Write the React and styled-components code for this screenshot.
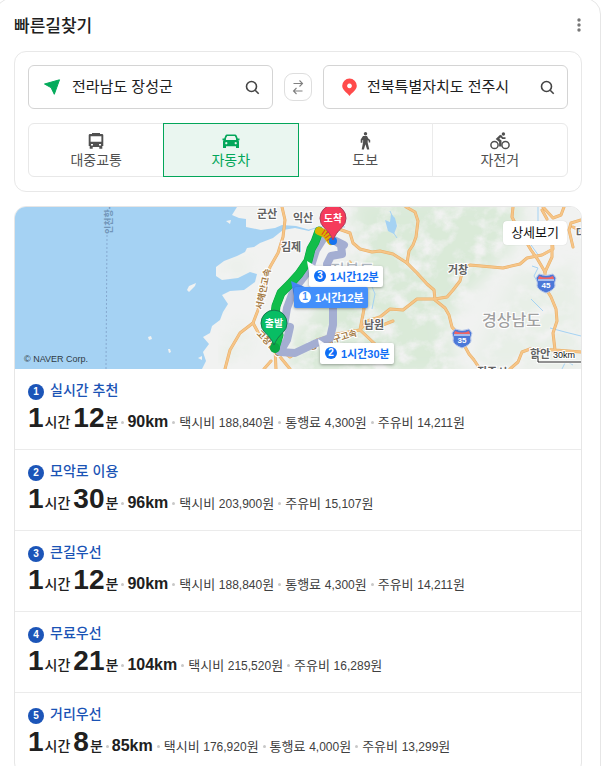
import { useState } from "react";
import styled, { createGlobalStyle } from "styled-components";

const MAP_WIDTH = 566;
const MAP_HEIGHT = 162;

const GlobalStyle = createGlobalStyle`
  * {
    box-sizing: border-box;
  }

  body {
    background: #fff;
    color: #202020;
    font-family: "Liberation Sans", "Noto Sans CJK KR", sans-serif;
    margin: 0;
  }

  button, input {
    font-family: inherit;
  }
`;

const Card = styled.main`
  border: 1px solid #e6e6e6;
  border-radius: 16px;
  margin: -2px 6px 0 -5px;
  padding: 0 18px 20px;
`;

const Header = styled.header`
  align-items: center;
  display: flex;
  height: 52px;
  justify-content: space-between;
`;

const Title = styled.h2`
  font-family: "Noto Sans CJK KR", sans-serif;
  font-size: 17px;
  font-weight: 500;
  line-height: 24px;
  margin: 0;
`;

const MoreButton = styled.button`
  background: none;
  border: 0;
  display: flex;
  height: 20px;
  padding: 3px 0;
  width: 5px;
`;

const SearchPanel = styled.section`
  border: 1px solid #e8e8e8;
  border-radius: 12px;
  display: flex;
  flex-direction: column;
  gap: 14px;
  margin-bottom: 14px;
  padding: 13px 13px 14px;
`;

const Places = styled.form`
  align-items: center;
  display: flex;
  gap: 11px;
`;

const Field = styled.div`
  align-items: center;
  border: 1px solid #d4d4d4;
  border-radius: 6px;
  display: flex;
  flex: 1;
  height: 44px;
  min-width: 0;
  padding: 0 11px 0 14px;
`;

const FieldLabel = styled.label`
  display: flex;
  flex: none;
  margin-right: 9px;
`;

const FieldInput = styled.input`
  background: none;
  border: 0;
  color: #202020;
  flex: 1;
  font-size: 15px;
  height: 28px;
  min-width: 0;
  outline: 0;
  padding: 0 0 4px;
`;

const IconButton = styled.button`
  background: none;
  border: 0;
  display: flex;
  flex: none;
  padding: 0;
`;

const SwapButton = styled(IconButton)`
  align-items: center;
  border: 1px solid #dedede;
  border-radius: 9px;
  height: 28px;
  justify-content: center;
  width: 28px;
`;

const Tabs = styled.div`
  border: 1px solid #e8e8e8;
  border-radius: 6px;
  display: flex;
  height: 54px;
`;

const Tab = styled.button`
  align-items: center;
  background: ${({ $active }) => ($active ? "#eaf6f0" : "none")};
  border: 1px solid ${({ $active }) => ($active ? "#03a65a" : "transparent")};
  color: ${({ $active }) => ($active ? "#03a65a" : "#505050")};
  display: flex;
  flex: 1;
  flex-direction: column;
  font-size: 14px;
  line-height: 20px;
  margin: -1px;
  padding: 8px 0 0;
  position: relative;
  z-index: ${({ $active }) => ($active ? 1 : 0)};

  &:not(:first-child) {
    border-left-color: ${({ $active }) => ($active ? "#03a65a" : "#ebebeb")};
  }
`;

const Results = styled.section`
  border: 1px solid #e6e6e6;
  border-radius: 12px;
  overflow: hidden;
`;

const MapFrame = styled.div`
  aspect-ratio: ${MAP_WIDTH} / ${MAP_HEIGHT};
  overflow: hidden;
  position: relative;
`;

const MapDrawing = styled.svg`
  display: block;
  height: 100%;
  width: 100%;
`;

const DetailLink = styled.a`
  background: #fff;
  border-radius: 4px;
  box-shadow: 0 0 1px #0003;
  color: #111;
  font-size: 13px;
  line-height: 24px;
  padding: 0 8px;
  position: absolute;
  right: 14px;
  text-decoration: none;
  top: 14px;
`;

const RouteTag = styled.button`
  align-items: center;
  background: ${({ $selected }) => ($selected ? "#438ffb" : "#fff")};
  border: 0;
  border-radius: 2px;
  box-shadow: 0 1px 3px #0005;
  color: ${({ $selected }) => ($selected ? "#fff" : "#0f6df5")};
  display: flex;
  font-size: 11px;
  font-weight: 700;
  gap: 4px;
  height: 21px;
  left: ${({ $x }) => ($x / MAP_WIDTH) * 100}%;
  padding: 0 4px 2px 5px;
  position: absolute;
  top: ${({ $y }) => ($y / MAP_HEIGHT) * 100}%;
  white-space: nowrap;
`;

const TagNumber = styled.span`
  background: ${({ $selected }) => ($selected ? "#fff" : "#0f6df5")};
  border-radius: 50%;
  color: ${({ $selected }) => ($selected ? "#438ffb" : "#fff")};
  font-size: 10px;
  height: 12px;
  line-height: 12px;
  text-align: center;
  width: 12px;
`;

const RouteList = styled.ol`
  list-style: none;
  margin: 0;
  padding: 0;
`;

const RouteItem = styled.li`
  border-bottom: 1px solid #ebebeb;
  padding: 12px 13px 13px;
`;

const RouteName = styled.a`
  align-items: center;
  color: #1a53b5;
  display: flex;
  font-size: 14px;
  font-weight: 500;
  gap: 6px;
  line-height: 19px;
  text-decoration: none;
`;

const RouteNumber = styled.span`
  background: #1c55b8;
  border-radius: 50%;
  color: #fff;
  font-size: 10px;
  font-weight: 700;
  height: 16px;
  line-height: 16px;
  margin-top: 3px;
  text-align: center;
  width: 16px;
`;

const RouteSummary = styled.div`
  align-items: baseline;
  display: flex;
  height: 36px;
  line-height: 36px;
  white-space: nowrap;
`;

const Amount = styled.strong`
  font-size: 28px;
`;

const Unit = styled.span`
  font-size: 14px;
  font-weight: 500;
  margin-left: 1px;

  & + strong {
    margin-left: 3px;
  }

  & + i {
    margin: 0 3px;
  }
`;

const Distance = styled.strong`
  font-size: 16px;
`;

const Dot = styled.i`
  background: #c8c8c8;
  border-radius: 50%;
  height: 3px;
  position: relative;
  top: -3px;
  width: 3px;

  ${Distance} ~ & {
    margin: 0 4px;
  }
`;

const Cost = styled.span`
  color: #404040;
  font-size: 13px;
`;

const CostNumber = styled.span`
  font-size: 12px;
`;

const tabs = [
  { key: "transit", label: "대중교통", Icon: BusIcon },
  { key: "car", label: "자동차", Icon: CarIcon },
  { key: "walk", label: "도보", Icon: WalkIcon },
  { key: "bike", label: "자전거", Icon: BikeIcon },
];

const routes = [
  {
    name: "실시간 추천",
    hours: 1,
    minutes: 12,
    distance: "90km",
    costs: [["택시비", "188,840"], ["통행료", "4,300"], ["주유비", "14,211"]],
  },
  {
    name: "모악로 이용",
    hours: 1,
    minutes: 30,
    distance: "96km",
    costs: [["택시비", "203,900"], ["주유비", "15,107"]],
  },
  {
    name: "큰길우선",
    hours: 1,
    minutes: 12,
    distance: "90km",
    costs: [["택시비", "188,840"], ["통행료", "4,300"], ["주유비", "14,211"]],
  },
  {
    name: "무료우선",
    hours: 1,
    minutes: 21,
    distance: "104km",
    costs: [["택시비", "215,520"], ["주유비", "16,289"]],
  },
  {
    name: "거리우선",
    hours: 1,
    minutes: 8,
    distance: "85km",
    costs: [["택시비", "176,920"], ["통행료", "4,000"], ["주유비", "13,299"]],
  },
];

const routeTags = [
  { number: 3, time: "1시간12분", x: 294, y: 59 },
  { number: 1, time: "1시간12분", x: 279, y: 80, selected: true },
  { number: 2, time: "1시간30분", x: 305, y: 136 },
];

const roads = [
  "M267 0 L270 13 L268 30 L263 46 L255 60 L249 80 L243 103 L238 116 L225 126 L215 143 L210 162",
  "M318 20 L335 26 L338 36 L345 42 L357 45 L365 44 L378 47 L392 56",
  "M391 0 L400 5 L403 14 L401 30 L398 38 L394 44 L392 56 L402 66 L412 77 L419 83 L420 93 L430 101 L434 108 L437 120 L444 128 L448 136 L454 147 L459 153 L465 162",
  "M252 133 L275 150 L302 133 L322 127 L345 123 L352 114 L365 110 L375 102 L388 103 L402 92 L420 92 L432 90 L438 83 L445 74 L448 62 L455 58 L477 60 L488 61 L505 57 L512 51 L527 48 L538 42 L537 30",
  "M507 28 L516 43 L523 53 L530 65 L530 80 L536 90 L541 102 L542 114 L538 126 L540 143 L566 145",
  "M498 0 L497 10 L504 24 M528 0 L538 11 L546 8 L549 0 M527 3 L532 12 M566 13 L556 16 L554 23 L558 40 M558 20 L566 24",
  "M537 35 L537 50 L530 65",
  "M495 162 L503 155 L507 145 L515 142 L540 143",
  "M238 116 L244 127 L256 137 L266 151 L275 162 M260 141 L261 162 M249 162 L256 154",
  "M345 123 L349 102 L345 78 L335 55 M345 123 L360 137 L365 145 M365 119 L378 114",
];

const regionLabels = [
  { text: "군산", x: 242, y: 11 },
  { text: "익산", x: 278, y: 15 },
  { text: "김제", x: 266, y: 44 },
  { text: "남원", x: 349, y: 122 },
  { text: "거창", x: 433, y: 67 },
  { text: "함안", x: 515, y: 151 },
  { text: "진주시", x: 462, y: 169 },
  { text: "대구", x: 561, y: 30 },
];

function BusIcon() {
  return (
    <svg width="18" height="18" viewBox="0 0 18 18" aria-hidden="true">
      <path
        fill="currentColor"
        fillRule="evenodd"
        d="M5 1h8v1h2q1.300 0 1.300 1.300V14h-1v2.800h-3V15H5.700v1.800h-3V14h-1V3.300Q1.700 2 3 2h2zM3.600 4.300v5.400h10.800V4.300zM4 12v1.500h2V12zm8 0v1.500h2V12z"
      />
    </svg>
  );
}

function CarIcon() {
  return (
    <svg width="18" height="18" viewBox="0 0 18 18" aria-hidden="true">
      <path
        fill="currentColor"
        fillRule="evenodd"
        d="M5 2.500h8q1.200 0 1.600 1.100l1.200 3h1.700v1.700h-1.100q.6.700.6 1.700v6h-3v-1.800H4V16H1v-6q0-1 .6-1.700H.5V6.600h1.700l1.200-3Q3.800 2.500 5 2.500zm.2 1.400Q3.600 6 3.900 8h10.200q.3-2-1.300-4.100zM4.300 10a1.100 1.100 0 1 0 .01 0zm9.400 0a1.100 1.100 0 1 0 .01 0z"
      />
    </svg>
  );
}

function WalkIcon() {
  return (
    <svg width="18" height="18" viewBox="0 0 18 18" aria-hidden="true">
      <circle cx="9.500" cy="1.800" r="1.700" fill="currentColor" />
      <path
        fill="currentColor"
        d="M7 4h4l1.300 2.500 1.900 1.500v2.500h-1.500V8.700l-1-.5v2.500l1.500 6.300v.6h-2.100L9.400 12.300 7.900 17.600H5.700L7.100 10V7.800l-.7.700v2.300H4.700V7.400z"
      />
    </svg>
  );
}

function BikeIcon() {
  return (
    <svg width="20" height="18" viewBox="0 0 20 18" aria-hidden="true">
      <g fill="none" stroke="currentColor">
        <circle cx="4.500" cy="13" r="3.600" strokeWidth="1.500" />
        <circle cx="15.500" cy="13" r="3.600" strokeWidth="1.500" />
        <path d="M11 3.500 7.500 7l2.800 2.200v5.300" strokeWidth="2.400" />
        <path d="m10.500 3.500 2 2.600h3" strokeWidth="1.700" />
      </g>
      <circle cx="13.400" cy="2" r="1.700" fill="currentColor" />
    </svg>
  );
}

function SearchIcon() {
  return (
    <svg width="18" height="18" viewBox="0 0 18 18" aria-hidden="true">
      <g fill="none" stroke="#444" strokeWidth="1.600">
        <circle cx="8.500" cy="8.500" r="5" />
        <path d="m12.200 12.200 3.500 3.500" />
      </g>
    </svg>
  );
}

function SwapIcon() {
  return (
    <svg width="12" height="16" viewBox="0 0 12 16" aria-hidden="true">
      <path
        d="M1.500 4.500h9M7.500 1.500l3 3-3 3M10.500 12h-9m3-3-3 3 3 3"
        fill="none"
        stroke="#808080"
        strokeWidth="1.100"
      />
    </svg>
  );
}

function DepartureIcon() {
  return (
    <svg width="20" height="20" viewBox="0 0 20 20" aria-hidden="true">
      <path
        d="M1.500 7 16.500 2.800 11.300 17.300 8 10.600z"
        fill="#03ab5b"
        stroke="#03ab5b"
        strokeLinejoin="round"
      />
    </svg>
  );
}

function ArrivalIcon() {
  return (
    <svg width="20" height="20" viewBox="0 0 20 20" aria-hidden="true">
      <path
        fill="#ff4b4b"
        fillRule="evenodd"
        d="M11.500 1.500A7.300 7.300 0 0 0 4.200 8.800c0 4 4.300 6.500 7.300 10.200 3-3.700 7.300-6.200 7.300-10.200a7.300 7.300 0 0 0-7.300-7.300zm0 5a2.400 2.400 0 1 1-.01 0z"
      />
    </svg>
  );
}

function MapPin({ x, y, label, color, edge }) {
  return (
    <g transform={`translate(${x} ${y})`}>
      <path
        d="M0 22C-2 17-5 13-9 9.500A13 13 0 1 1 9 9.500C5 13 2 17 0 22z"
        fill={color}
        stroke={edge}
        strokeWidth="1"
      />
      <text y="4" fill="#fff" fontSize="10" fontWeight="700" textAnchor="middle">
        {label}
      </text>
    </g>
  );
}

function RoadShield({ x, y, number }) {
  return (
    <g transform={`translate(${x} ${y})`}>
      <path
        d="M-7-9Q0-6 7-9L10-5Q8 0 9 3 8 7 0 10-8 7-9 3-8 0-10-5z"
        fill="#4c78d8"
        stroke="#b9c8ea"
      />
      <path d="M-7-7Q0-4 7-7L8-4H-8z" fill="#f06464" />
      <path d="M-8-3H8" stroke="#fff" />
      <text y="5" fill="#fff" fontSize="8" fontWeight="700" textAnchor="middle">
        {number}
      </text>
    </g>
  );
}

function RouteMap() {
  return (
    <MapFrame>
      <MapDrawing
        viewBox={`0 0 ${MAP_WIDTH} ${MAP_HEIGHT}`}
        preserveAspectRatio="xMidYMid slice"
        role="img"
        aria-label="경로 지도"
      >
        <defs>
          <filter id="relief" x="0" y="0" width="100%" height="100%">
            <feTurbulence type="fractalNoise" baseFrequency="0.05 0.06" numOctaves="5" seed="8" />
            <feColorMatrix values="0 0 0 0 0.7  0 0 0 0 0.82  0 0 0 0 0.69  3 0 0 0 -0.7" />
            <feComposite in2="SourceGraphic" operator="in" />
          </filter>
          <filter id="soft">
            <feGaussianBlur stdDeviation="9" />
          </filter>
        </defs>
        <rect width="566" height="162" fill="#f1f2f1" />
        <g filter="url(#relief)">
          <path
            d="M335-10H510L500 35 475 65 450 90 430 120 445 170H282L270 140 295 110 310 80 345 55z"
            filter="url(#soft)"
          />
          <path d="M205 60l20-12 12 12-14 12zM500 60h66v102H455zM220 115l18 12-15 30-20 5z" filter="url(#soft)" opacity=".4" />
        </g>
        <path
          d="M0 0H222L217 8 224 11 231 12 231 20 246 23 260 21 267 18 281 19 295 23 294 24 280 21 268 23 258 31 245 36 239 40 232 41 230 45 222 49 209 54 201 60 201 69 207 73 223 71 235 65 242 67 240 75 229 83 215 84 207 88 213 97 208 105 205 113 197 119 195 126 188 130 194 137 188 145 191 154 187 162H0z"
          fill="#a5d2f3"
        />
        <g fill="#f1f2f1">
          <path d="M172 83 174 79 181 76 180 79 174 85zM133 130l3-1 1 3-3 1zM153 142l2 0 1 3-2 1zM183 151l4-2v4z" />
          <path d="M211 14l5-1-1 4z" />
        </g>
        <g fill="none" stroke="#a5d2f3" strokeWidth="1">
          <path d="M294 23Q310 17 330 20M375 4 380 15 376 22 382 31M517 59l6 2-4 8 3 5M516 92l12 12M535 121l15 4 16 4M523 0v18l4 8M355 75l5 12-3 15" />
          <path d="M516 38l8 11M545 166l6-12 7 4" />
        </g>
        <path d="M370 13l5 2 1-8 4 4 2 8-3 8-6-3z" fill="#a5d2f3" />
        <path d="M92 28 91 162" stroke="#86a9d0" strokeDasharray="2 2" />
        <text
          transform="translate(97 27) rotate(-90)"
          fill="#7195b8"
          fontSize="9"
          fontWeight="700"
        >
          인천항-
        </text>

        <g fill="none" strokeLinecap="round" strokeLinejoin="round">
          {roads.map((d) => (
            <path key={d} d={d} stroke="#e9ae66" strokeWidth="3" />
          ))}
          {roads.map((d) => (
            <path key={d} d={d} stroke="#f6c588" strokeWidth="2" />
          ))}
        </g>

        <g fontWeight="700" stroke="#fff" strokeWidth="2" paintOrder="stroke">
          {regionLabels.map(({ text, x, y }) => (
            <text key={text} x={x} y={y} fill="#626262" fontSize="11">
              {text}
            </text>
          ))}
          <text x="467" y="119" fill="#a0a0a0" fontSize="16" fontWeight="500">
            경상남도
          </text>
          <text x="315" y="69" fill="#aeb7c0" fontSize="16" fontWeight="500">
            전북도
          </text>
          <g fill="#a47a45" fontSize="9">
            <text transform="translate(247 103) rotate(-78)">서해안고속</text>
            <text transform="translate(241 127) rotate(45)">고창담양</text>
            <text transform="translate(295 143) rotate(-17)">광주대구고속</text>
          </g>
        </g>

        <g fill="none" strokeLinecap="round" strokeLinejoin="round">
          <path
            d="M308 32 301 43 295 62 284 76 278 85 272 101 269 119 275 120 272 133 265 145 280 146 299 137 315 131 318 118 318 97 314 79 312 57 316 49 327 47 326 38 314 30 M317 32 329 38"
            stroke="#a4aed2"
            strokeWidth="8"
          />
          <path
            d="M304 24 300 35 296 42 293 54 284 67 275 77 266 86 261 99 259 116 264 128 260 141"
            stroke="#07a63f"
            strokeWidth="9"
          />
          <path
            d="M304 24 300 35 296 42 293 54 284 67 275 77 266 86 261 99 259 116 264 128 260 141"
            stroke="#11bd4a"
            strokeWidth="8"
          />
          <path d="M304 24 311 27 316 34" stroke="#d6b400" strokeWidth="8" />
          <path d="M308 25 311 27 316 34" stroke="#e33b28" strokeWidth="6" strokeDasharray="1 2" strokeLinecap="butt" />
        </g>
        <circle cx="318" cy="34" r="4" fill="#1672ef" />
        <circle cx="260" cy="141" r="5" fill="#09a843" />
        <MapPin x={318} y={11} label="도착" color="#f53b5b" edge="#a8405a" />
        <MapPin x={259} y={116} label="출발" color="#08bd64" edge="#16784c" />
        <RoadShield x={447} y={131} number="35" />
        <RoadShield x={531} y={76} number="45" />

        <path d="M276 74 292 81 279 89z" fill="#4386f5" />
        <path d="M292 54 304 61 294 66z" fill="#fff" />
        <path d="M303 132 314 139 305 144z" fill="#fff" />
        <text x="9" y="155" fill="#303b44" fontSize="9">
          © NAVER Corp.
        </text>
        <path d="M523 151v4h43" fill="none" stroke="#fff" strokeWidth="3" />
        <path d="M523 151v4h43" fill="none" stroke="#222" />
        <text
          x="538"
          y="151"
          fill="#111"
          fontSize="9"
          stroke="#fff"
          strokeWidth="2"
          paintOrder="stroke"
        >
          30km
        </text>
      </MapDrawing>
      {routeTags.map(({ number, time, x, y, selected }) => (
        <RouteTag key={number} type="button" $x={x} $y={y} $selected={selected}>
          <TagNumber $selected={selected}>{number}</TagNumber>
          {time}
        </RouteTag>
      ))}
      <DetailLink href="#map">상세보기</DetailLink>
    </MapFrame>
  );
}

function PlaceField({ id, label, icon, value, onChange }) {
  return (
    <Field>
      <FieldLabel htmlFor={id} aria-label={label}>
        {icon}
      </FieldLabel>
      <FieldInput
        id={id}
        value={value}
        onChange={(event) => onChange(event.target.value)}
      />
      <IconButton type="button" aria-label={`${label} 검색`}>
        <SearchIcon />
      </IconButton>
    </Field>
  );
}

function Route({ route, number }) {
  return (
    <RouteItem>
      <RouteName href={`#route-${number}`}>
        <RouteNumber>{number}</RouteNumber>
        {route.name}
      </RouteName>
      <RouteSummary>
        <Amount>{route.hours}</Amount>
        <Unit>시간</Unit>
        <Amount>{route.minutes}</Amount>
        <Unit>분</Unit>
        <Dot />
        <Distance>{route.distance}</Distance>
        {route.costs.map(([name, price]) => (
          <RouteCost key={name} name={name} price={price} />
        ))}
      </RouteSummary>
    </RouteItem>
  );
}

function RouteCost({ name, price }) {
  return (
    <>
      <Dot />
      <Cost>
        {name} <CostNumber>{price}</CostNumber>원
      </Cost>
    </>
  );
}

export default function App() {
  const [start, setStart] = useState("전라남도 장성군");
  const [goal, setGoal] = useState("전북특별자치도 전주시");
  const [mode, setMode] = useState("car");

  const swapPlaces = () => {
    setStart(goal);
    setGoal(start);
  };

  return (
    <>
      <GlobalStyle />
      <Card>
        <Header>
          <Title>빠른길찾기</Title>
          <MoreButton type="button" aria-label="더보기">
            <svg width="4" height="14" viewBox="0 0 4 14" fill="#777">
              <circle cx="2" cy="2" r="1.700" />
              <circle cx="2" cy="7" r="1.700" />
              <circle cx="2" cy="12" r="1.700" />
            </svg>
          </MoreButton>
        </Header>
        <SearchPanel>
          <Places>
            <PlaceField
              id="start"
              label="출발지"
              icon={<DepartureIcon />}
              value={start}
              onChange={setStart}
            />
            <SwapButton
              type="button"
              aria-label="출발지와 도착지 바꾸기"
              onClick={swapPlaces}
            >
              <SwapIcon />
            </SwapButton>
            <PlaceField
              id="goal"
              label="도착지"
              icon={<ArrivalIcon />}
              value={goal}
              onChange={setGoal}
            />
          </Places>
          <Tabs>
            {tabs.map(({ key, label, Icon }) => (
              <Tab
                key={key}
                type="button"
                aria-pressed={mode === key}
                $active={mode === key}
                onClick={() => setMode(key)}
              >
                <Icon />
                {label}
              </Tab>
            ))}
          </Tabs>
        </SearchPanel>
        <Results>
          <RouteMap />
          <RouteList>
            {routes.map((route, index) => (
              <Route key={route.name} route={route} number={index + 1} />
            ))}
          </RouteList>
        </Results>
      </Card>
    </>
  );
}
